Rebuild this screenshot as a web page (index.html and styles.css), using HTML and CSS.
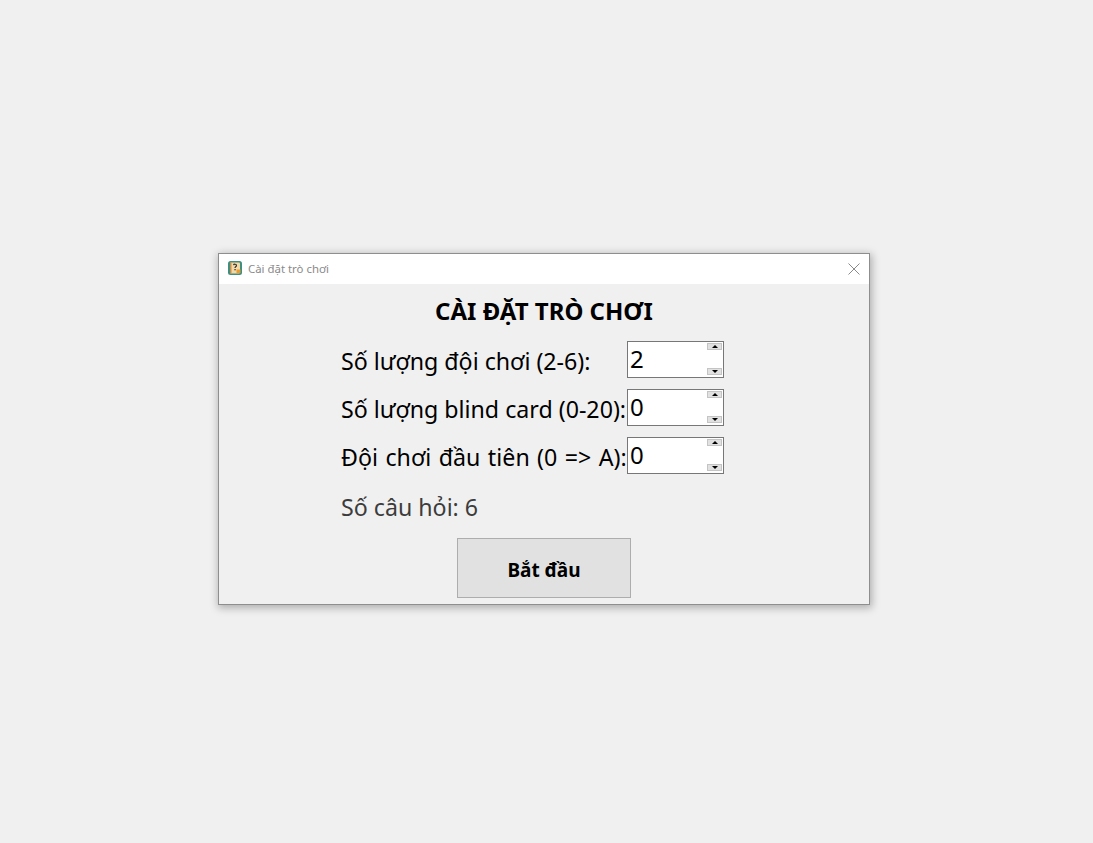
FILE: index.html
```html
<!DOCTYPE html>
<html>
<head>
    <title>Cài đặt trò chơi</title>
    <link rel="stylesheet" href="styles.css">
</head>
<body>
    <div class="window">
        <div class="title-bar">
            <svg class="app-icon" width="14" height="14" viewBox="0 0 14 14">
                <rect x="0" y="0" width="14" height="14" rx="2.5" fill="#3f8f80"/>
                <rect x="2" y="1.5" width="10" height="11" rx="1" fill="#f3d9a6"/>
                <rect x="2" y="1.5" width="1.5" height="11" fill="#c98f4a"/>
                <rect x="8.5" y="8.5" width="4" height="3.5" fill="#ef9a2e"/>
                <path d="M5.5 4.2 C5.8 2.8 8.6 2.9 8.5 4.6 C8.4 5.6 7.1 5.6 7 7" fill="none" stroke="#333" stroke-width="1.2"/>
                <rect x="6.4" y="8" width="1.3" height="1.3" fill="#333"/>
            </svg>
            <span class="window-title">Cài đặt trò chơi</span>
            <svg class="close-icon" width="12" height="12" viewBox="0 0 12 12">
                <path d="M0.5 0.5 L11.5 11.5 M11.5 0.5 L0.5 11.5" stroke="#8a8a8a" stroke-width="1" fill="none"/>
            </svg>
        </div>
        <div class="content">
            <h1 class="heading">CÀI ĐẶT TRÒ CHƠI</h1>
            <div class="form">
                <label class="field-label">Số lượng đội chơi (2-6):</label>
                <div class="spinbox">
                    <span class="spin-value">2</span>
                    <div class="spin-buttons">
                        <span class="spin-button"><i class="arrow-up"></i></span>
                        <span class="spin-button"><i class="arrow-down"></i></span>
                    </div>
                </div>
                <label class="field-label">Số lượng blind card (0-20):</label>
                <div class="spinbox">
                    <span class="spin-value">0</span>
                    <div class="spin-buttons">
                        <span class="spin-button"><i class="arrow-up"></i></span>
                        <span class="spin-button"><i class="arrow-down"></i></span>
                    </div>
                </div>
                <label class="field-label field-label-wide">Đội chơi đầu tiên (0 =&gt; A):</label>
                <div class="spinbox">
                    <span class="spin-value">0</span>
                    <div class="spin-buttons">
                        <span class="spin-button"><i class="arrow-up"></i></span>
                        <span class="spin-button"><i class="arrow-down"></i></span>
                    </div>
                </div>
            </div>
            <div class="question-count">Số câu hỏi: 6</div>
            <button class="start-button">Bắt đầu</button>
        </div>
    </div>
</body>
</html>
```

FILE: styles.css
```css
html, body {
    height: 100%;
}
body {
    margin: 0;
    background-color: #f0f0f0;
    font-family: "Noto Sans", "Open Sans", sans-serif;
    color: #000;
    padding: 254px 0 0 219px;
    box-sizing: border-box;
    overflow: hidden;
}
.window {
    width: 650px;
    height: 350px;
    box-sizing: border-box;
    background-color: #f0f0f0;
    box-shadow: 0 0 0 1px #8e8e8e, 1px 2px 8px 2px rgba(0, 0, 0, 0.28);
}
.title-bar {
    height: 30px;
    background-color: #fff;
    display: flex;
    align-items: center;
    padding: 0 9px;
}
.app-icon {
    margin-right: 6px;
    margin-top: -2px;
}
.window-title {
    font-size: 11.4px;
    color: #8a8a8a;
    flex: 1;
    margin-top: -2px;
}
.close-icon {
    margin-top: -1px;
}
.content {
    display: flex;
    flex-direction: column;
    align-items: center;
}
.heading {
    margin: 11px 0 0 0;
    height: 46px;
    line-height: 32px;
    font-size: 24px;
    font-weight: bold;
}
.form {
    display: grid;
    grid-template-columns: 286px 97px;
    row-gap: 11px;
    width: 383px;
    align-self: flex-start;
    margin-left: 122px;
}
.field-label {
    font-size: 23.2px;
    line-height: 37px;
    padding-top: 2px;
    height: 37px;
    box-sizing: border-box;
    white-space: nowrap;
}
.field-label-wide {
    word-spacing: 1.2px;
    letter-spacing: 0.06px;
}
.spinbox {
    height: 37px;
    box-sizing: border-box;
    background-color: #fff;
    border: 1px solid #777;
    display: flex;
    justify-content: space-between;
}
.spin-value {
    font-size: 24px;
    line-height: 33px;
    padding-left: 2px;
}
.spin-buttons {
    display: flex;
    flex-direction: column;
    justify-content: space-between;
    padding: 1px 0 2px 0;
    margin-right: 1px;
}
.spin-button {
    width: 15px;
    height: 7px;
    box-sizing: border-box;
    background-color: #e1e1e1;
    border: 1px solid #c4c4c4;
    display: flex;
    align-items: center;
    justify-content: center;
}
.arrow-up, .arrow-down {
    width: 0;
    height: 0;
    border-left: 3px solid transparent;
    border-right: 3px solid transparent;
}
.arrow-up {
    border-bottom: 3px solid #000;
}
.arrow-down {
    border-top: 3px solid #000;
}
.question-count {
    width: 383px;
    align-self: flex-start;
    margin-left: 122px;
    margin-top: 16px;
    font-size: 23.2px;
    line-height: 34px;
    color: #3c3c3c;
}
.start-button {
    width: 174px;
    height: 60px;
    margin-top: 14px;
    background-color: #e1e1e1;
    border: 1px solid #adadad;
    font-family: inherit;
    font-size: 19px;
    font-weight: bold;
    color: #000;
    padding: 4px 0 0 0;
}
```
